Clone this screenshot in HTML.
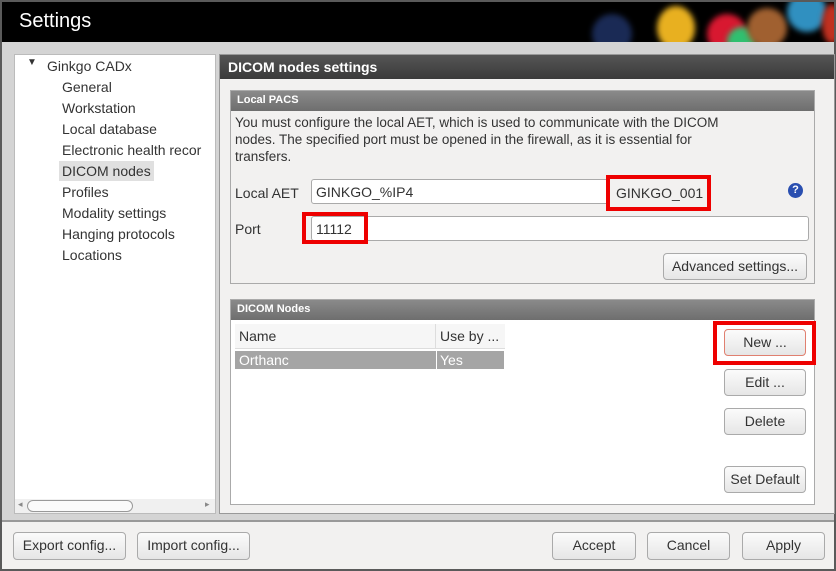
<!DOCTYPE html>
<html><head><style>
*{box-sizing:border-box;margin:0;padding:0}
body{width:836px;height:571px;overflow:hidden;background:#5a5a5a;font-family:"Liberation Sans",sans-serif;font-size:14px;color:#333;position:relative}
.abs{position:absolute}
#title{left:2px;top:2px;width:832px;height:40px;background:#000;overflow:hidden}
#title span{position:absolute;left:17px;top:8px;color:#fff;font-size:20px}
.dot{position:absolute;border-radius:50%;filter:blur(3px)}
#body{left:2px;top:42px;width:832px;height:478px;background:#d4d4d4}
#tree{left:14px;top:54px;width:202px;height:460px;background:#fff;border:1px solid #bbb;overflow:hidden}
#tree div{position:absolute;left:47px;font-size:14px;color:#333;white-space:nowrap}
#right{left:219px;top:54px;width:616px;height:460px;background:#f2f1f0;border:1px solid #999}
#rh{left:0;top:0;width:100%;height:24px;background:linear-gradient(#555,#3a3a3a);color:#fff;font-weight:bold;font-size:14px;padding:4px 8px}
.box{border:1px solid #aaa;background:#f2f1f0}
.bh{height:20px;background:linear-gradient(#8a8a8a,#6e6e6e);color:#fff;font-weight:bold;font-size:11px;padding:3px 6px}
.inp{position:absolute;background:#fff;border:1px solid #aaa;border-radius:3px;height:25px;padding:4px 4px;font-size:14px}
.btn{position:absolute;border:1px solid #aaa;border-radius:4px;background:linear-gradient(#fbfbfb,#e6e6e6);text-align:center;font-size:14px;color:#333;line-height:24px}
.red{position:absolute;border:4px solid #e00}
#foot{left:2px;top:520px;width:832px;height:49px;background:#f2f1f0;border-top:2px solid #999}
</style></head><body>
<div id="title" class="abs">
<div class="dot" style="left:590px;top:12px;width:40px;height:40px;background:#1a2a55"></div>
<div class="dot" style="left:655px;top:4px;width:38px;height:44px;background:#e8b020"></div>
<div class="dot" style="left:705px;top:12px;width:40px;height:40px;background:#d81830"></div>
<div class="dot" style="left:725px;top:25px;width:30px;height:30px;background:#30c070"></div>
<div class="dot" style="left:745px;top:6px;width:40px;height:40px;background:#a06030"></div>
<div class="dot" style="left:785px;top:-10px;width:40px;height:40px;background:#3090c0"></div>
<div class="dot" style="left:820px;top:2px;width:20px;height:40px;background:#c03020"></div>
<span>Settings</span></div>
<div id="body" class="abs"></div>
<div id="tree" class="abs">
<span class="abs" style="left:12px;top:2px;font-size:10px">▼</span>
<div style="left:32px;top:3px">Ginkgo CADx</div>
<div style="top:24px">General</div>
<div style="top:45px">Workstation</div>
<div style="top:66px">Local database</div>
<div style="top:87px">Electronic health recor</div>
<div style="top:106px;left:44px;background:#e0e0e0;padding:2px 3px">DICOM nodes</div>
<div style="top:129px">Profiles</div>
<div style="top:150px">Modality settings</div>
<div style="top:171px">Hanging protocols</div>
<div style="top:192px">Locations</div>
<div class="abs" style="left:0;top:444px;width:200px;height:14px;background:#f0f0f0"></div>
<span class="abs" style="left:3px;top:444px;font-size:9px;color:#888">◂</span>
<span class="abs" style="left:190px;top:444px;font-size:9px;color:#888">▸</span>
<div class="abs" style="left:12px;top:445px;width:106px;height:12px;border:1px solid #999;border-radius:6px;background:#fafafa"></div>
</div>
<div id="right" class="abs">
<div id="rh" class="abs">DICOM nodes settings</div>
<div class="abs box" style="left:10px;top:35px;width:585px;height:194px">
<div class="bh">Local PACS</div>
<div class="abs" style="left:4px;top:23px;line-height:17px;font-size:13.5px;white-space:nowrap">You must configure the local AET, which is used to communicate with the DICOM<br>nodes. The specified port must be opened in the firewall, as it is essential for<br>transfers.</div>
<div class="abs" style="left:4px;top:94px">Local AET</div>
<div class="inp" style="left:80px;top:88px;width:298px">GINKGO_%IP4</div>
<div class="abs" style="left:385px;top:94px">GINKGO_001</div>
<div class="red" style="left:375px;top:84px;width:105px;height:36px"></div>
<div class="abs" style="left:557px;top:92px;width:15px;height:15px;border-radius:50%;background:#2a4fb0;color:#fff;font-size:11px;font-weight:bold;text-align:center;line-height:15px">?</div>
<div class="abs" style="left:4px;top:130px">Port</div>
<div class="inp" style="left:80px;top:125px;width:498px">11112</div>
<div class="red" style="left:71px;top:121px;width:66px;height:32px"></div>
<div class="btn" style="left:432px;top:162px;width:144px;height:27px">Advanced settings...</div>
</div>
<div class="abs box" style="left:10px;top:244px;width:585px;height:206px;background:#fff">
<div class="bh">DICOM Nodes</div>
<div class="abs" style="left:4px;top:24px;width:270px;height:25px;background:#f6f6f6;border-bottom:1px solid #ddd"></div>
<div class="abs" style="left:8px;top:28px">Name</div>
<div class="abs" style="left:204px;top:24px;height:25px;border-left:1px solid #ddd"></div>
<div class="abs" style="left:209px;top:28px">Use by ...</div>
<div class="abs" style="left:4px;top:51px;width:269px;height:18px;background:#a5a5a5;color:#fff;padding:1px 4px">Orthanc<span class="abs" style="left:201px;top:0;border-left:1px solid #fff;padding:1px 3px">Yes</span></div>
<div class="btn" style="left:493px;top:29px;width:82px;height:27px;border-color:#e08070">New ...</div>
<div class="red" style="left:482px;top:21px;width:103px;height:44px"></div>
<div class="btn" style="left:493px;top:69px;width:82px;height:27px">Edit ...</div>
<div class="btn" style="left:493px;top:108px;width:82px;height:27px">Delete</div>
<div class="btn" style="left:493px;top:166px;width:82px;height:27px">Set Default</div>
</div>
</div>
<div id="foot" class="abs">
<div class="btn" style="left:11px;top:10px;width:113px;height:28px">Export config...</div>
<div class="btn" style="left:135px;top:10px;width:113px;height:28px">Import config...</div>
<div class="btn" style="left:550px;top:10px;width:84px;height:28px">Accept</div>
<div class="btn" style="left:645px;top:10px;width:83px;height:28px">Cancel</div>
<div class="btn" style="left:740px;top:10px;width:83px;height:28px">Apply</div>
</div>
</body></html>
